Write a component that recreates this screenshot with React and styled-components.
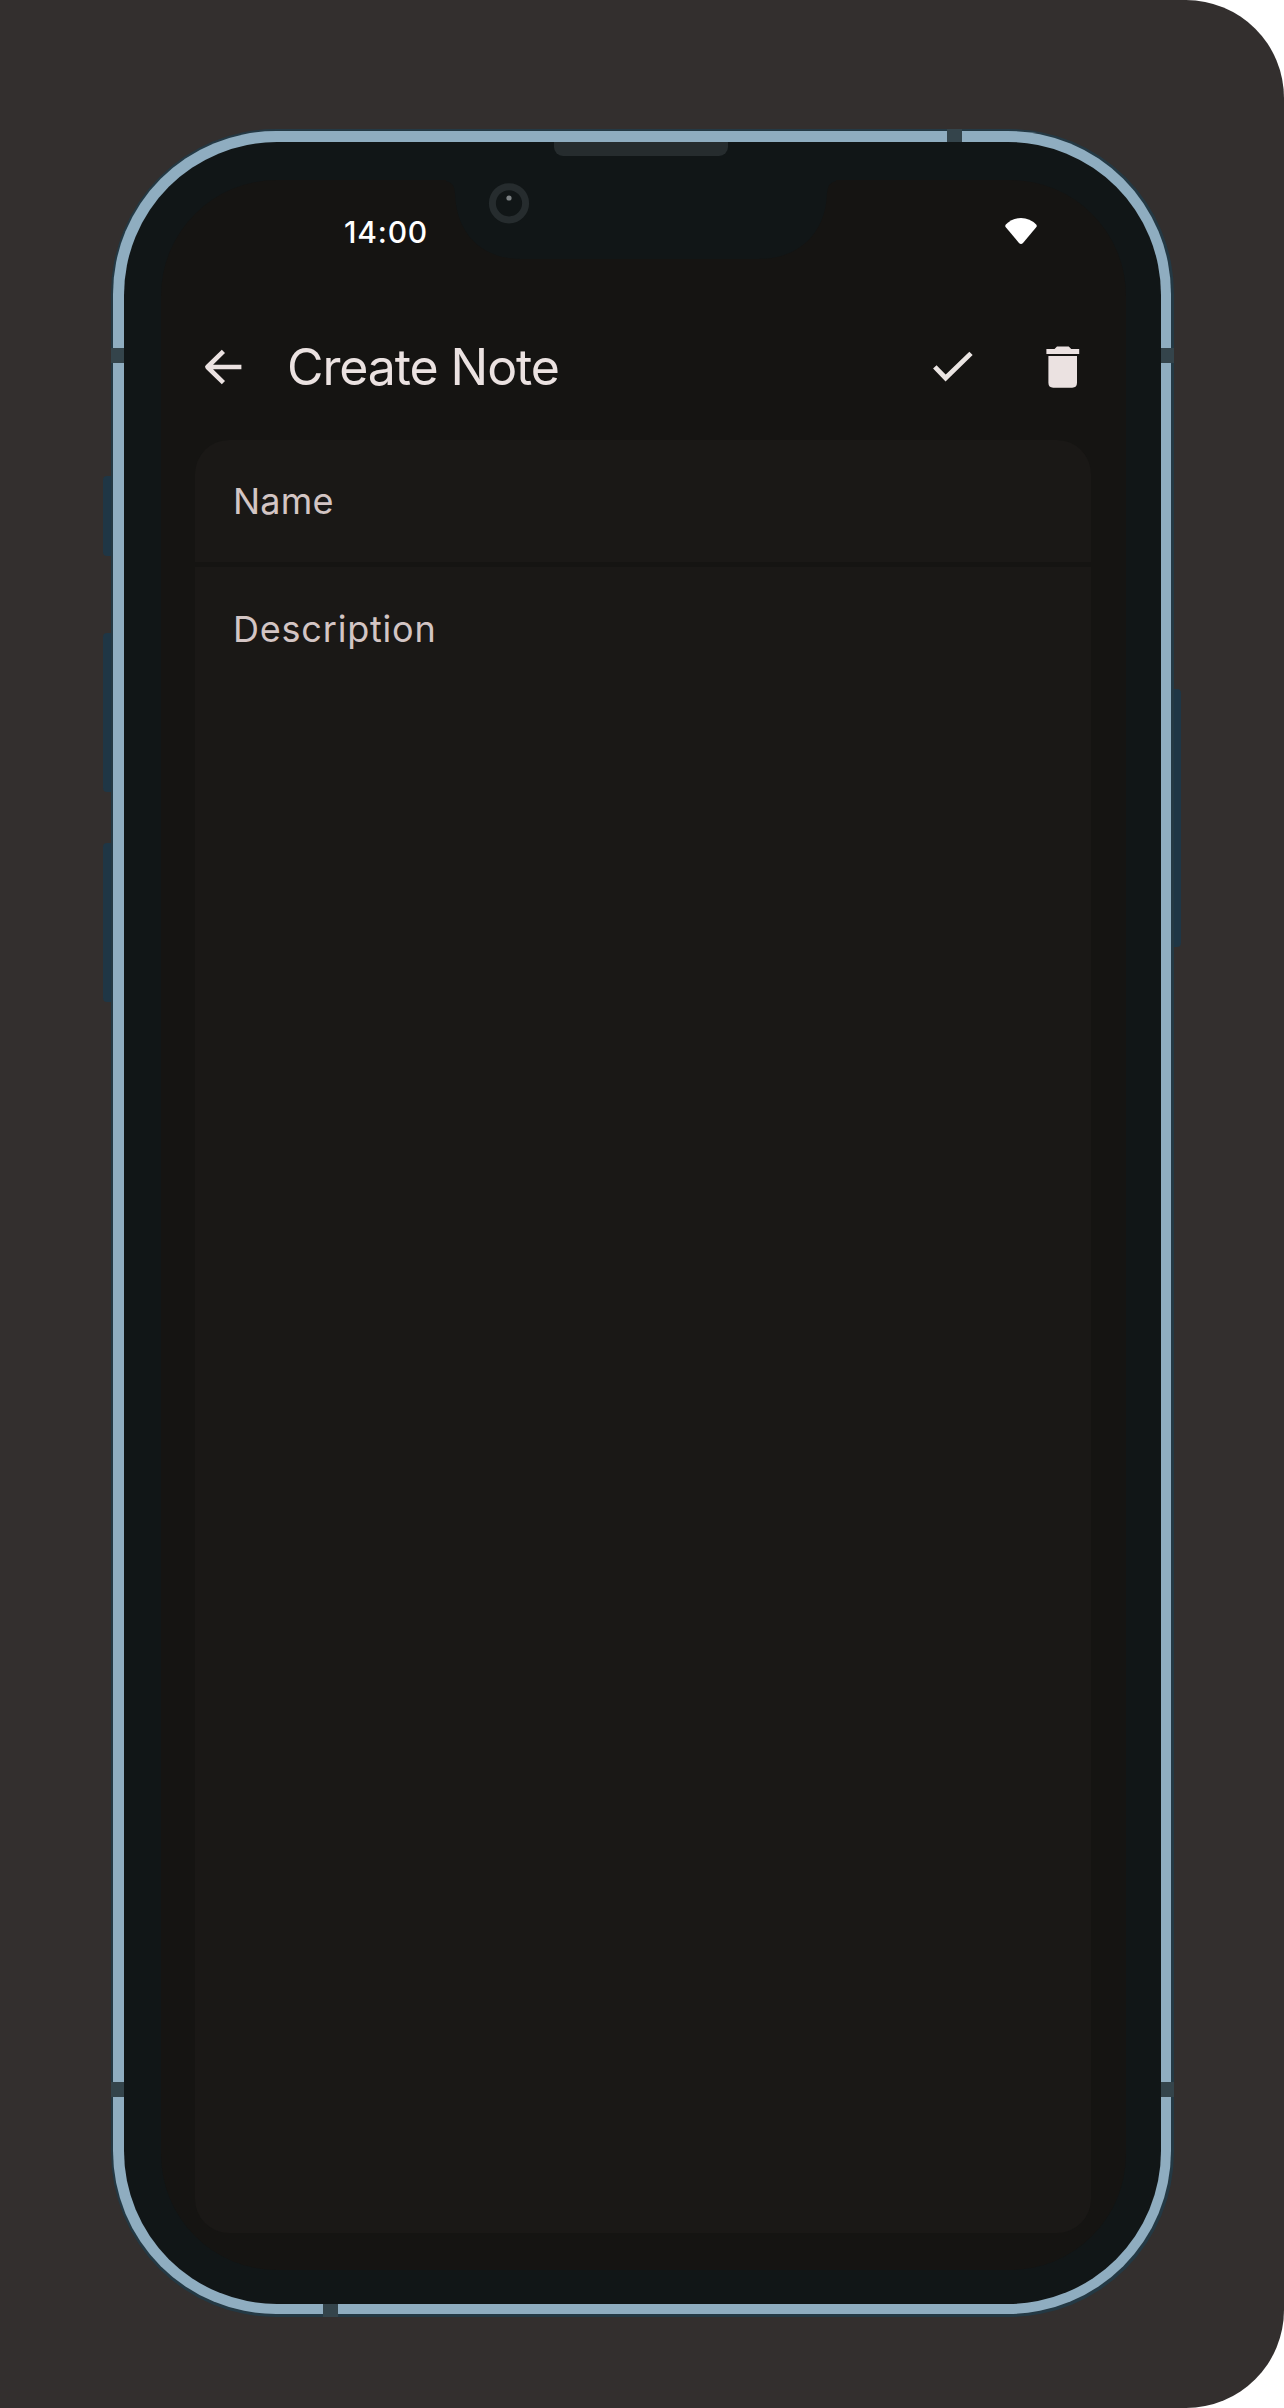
import React from "react";
import styled, { createGlobalStyle } from "styled-components";

const GlobalStyle = createGlobalStyle`
  * { box-sizing: border-box; }
  body { margin: 0; background: #ffffff; font-family: Inter, "Liberation Sans", sans-serif; }
`;

const Backdrop = styled.main`
  width: 1284px;
  height: 2408px;
  padding: 129px 110px 91px 111px;
  background: #332f2e;
  border-radius: 0 98px 98px 0;
`;

const Phone = styled.div`
  position: relative;
  width: 1063px;
  height: 2188px;
  padding: 2px 3px 3px 2px;
  border-radius: 165px;
  background: #243944;
`;

const SideButton = styled.span`
  position: absolute;
  z-index: -1;
  top: ${(p) => p.$top}px;
  ${(p) => p.$side}: ${(p) => (p.$side === "left" ? -8 : -7)}px;
  width: 14px;
  height: ${(p) => p.$length}px;
  border-radius: 4px;
  background: #1f3645;
`;

const Stage = styled.div`
  isolation: isolate;
`;

const Rim = styled.div`
  height: 100%;
  padding: 11px 10px 10px 11px;
  border-radius: 163px;
  background: #8fadc0;
`;

const Bezel = styled.div`
  height: 100%;
  padding: 38px 35px 34px 37px;
  border-radius: 153px;
  background: #111617;
`;

const AntennaBand = styled.span`
  position: absolute;
  top: ${(p) => p.$top}px;
  left: ${(p) => p.$left}px;
  width: ${(p) => (p.$upright ? 15 : 13)}px;
  height: ${(p) => (p.$upright ? 13 : 15)}px;
  background: #34444b;
`;

const Speaker = styled.span`
  position: absolute;
  top: 13px;
  left: 443px;
  width: 174px;
  height: 14px;
  border-radius: 0 0 9px 9px;
  background: #262c2e;
`;

const Notch = styled.svg`
  position: absolute;
  top: 50px;
  left: 335px;
`;

const Screen = styled.div`
  height: 100%;
  display: flex;
  flex-direction: column;
  padding: 0 35px 37px 34px;
  border-radius: 116px;
  background: #151412;
`;

const StatusBar = styled.header`
  height: 105px;
  flex: none;
  display: flex;
  align-items: center;
  justify-content: space-between;
  padding: 0 54px 3px 149px;
`;

const Clock = styled.time`
  padding-top: 2px;
  font: 500 30px/36px Inter, sans-serif;
  letter-spacing: 0.8px;
  color: #ffffff;
`;

const AppBar = styled.div`
  height: 155px;
  flex: none;
  display: flex;
  align-items: center;
  padding: 8px 11px 0 9px;
`;

const IconButton = styled.button`
  display: flex;
  margin: 0 0 0 ${(p) => p.$gap || 0}px;
  padding: 0;
  border: 0;
  background: none;
`;

const Title = styled.h1`
  flex: 1;
  margin: 0 0 0 45px;
  font: 400 50px/60px Inter, sans-serif;
  letter-spacing: -1.1px;
  color: #ebe2e1;
`;

const Form = styled.form`
  flex: 1;
  display: flex;
  flex-direction: column;
  gap: 5px;
  border-radius: 34px;
  overflow: hidden;
`;

const Field = styled.label`
  flex: ${(p) => (p.$fill ? "1" : "0 0 122px")};
  padding: ${(p) => (p.$fill ? 40 : 39)}px 38px;
  font: 400 36px/44px Inter, sans-serif;
  letter-spacing: ${(p) => p.$tracking}px;
  color: #d3c5c4;
  background: #1a1816;
`;

const bands = [
  { top: 219, left: 0 },
  { top: 219, left: 1050 },
  { top: 1953, left: 0 },
  { top: 1953, left: 1050 },
  { top: 0, left: 836, upright: true },
  { top: 2175, left: 212, upright: true },
];

const buttons = [
  { side: "left", top: 347, length: 80 },
  { side: "left", top: 504, length: 159 },
  { side: "left", top: 714, length: 159 },
  { side: "right", top: 560, length: 258 },
];

const WifiIcon = () => (
  <svg width="32" height="26" viewBox="0 0 32 26" fill="#fff">
    <path d="M.8 6.6Q7 0 16 0T31.2 6.6Q32.3 7.9 31.2 9.3L18.2 24.8Q16 27.2 13.8 24.8L.8 9.3Q-.3 7.9.8 6.6Z" />
  </svg>
);

const BackIcon = () => (
  <svg width="38" height="36" viewBox="0 0 38 36" fill="none" stroke="#ebe2e1" strokeWidth="4.6">
    <path d="M19.4 2.4 3.4 18 19.4 33.6M3.4 18H37.4" strokeLinejoin="round" />
  </svg>
);

const CheckIcon = () => (
  <svg width="40" height="32" viewBox="0 0 40 32" fill="none" stroke="#ebe5e3" strokeWidth="4.8">
    <path d="M1.8 15.8 12.6 27 38 2.4" />
  </svg>
);

const TrashIcon = () => (
  <svg width="34" height="42" viewBox="0 0 34 42" fill="#ebe2e1">
    <path d="M.4 3H8.5L11 .5H22.7L25.2 3H33.2V8H.4ZM2.4 10H31V36.8Q31 41.7 26.2 41.7H7.2Q2.4 41.7 2.4 36.8Z" />
  </svg>
);

export default function App() {
  return (
    <>
      <GlobalStyle />
      <Backdrop>
        <Stage>
          <Phone>
            {buttons.map((b) => (
              <SideButton key={`${b.side}${b.top}`} $side={b.side} $top={b.top} $length={b.length} />
            ))}
            <Rim>
              <Bezel>
                <Screen>
                  <StatusBar>
                    <Clock>14:00</Clock>
                    <WifiIcon />
                  </StatusBar>
                  <AppBar>
                    <IconButton aria-label="Back"><BackIcon /></IconButton>
                    <Title>Create Note</Title>
                    <IconButton aria-label="Save"><CheckIcon /></IconButton>
                    <IconButton aria-label="Delete" $gap={73}><TrashIcon /></IconButton>
                  </AppBar>
                  <Form>
                    <Field $tracking={0.2}>Name</Field>
                    <Field $fill $tracking={0.8}>Description</Field>
                  </Form>
                </Screen>
              </Bezel>
            </Rim>
            <Notch width="390" height="80" viewBox="0 0 390 80">
              <path fill="#111617" d="M0 0H390V2Q382 3 381 14C380 54 353 80 313 80H75C35 80 10 54 9 14Q8 3 0 2Z" />
              <circle cx="63" cy="24.3" r="16.6" fill="none" stroke="#262c2e" strokeWidth="7" />
              <circle cx="63" cy="19" r="2.6" fill="#7c8183" />
            </Notch>
            <Speaker />
            {bands.map((b) => (
              <AntennaBand key={`${b.top}-${b.left}`} $top={b.top} $left={b.left} $upright={b.upright} />
            ))}
          </Phone>
        </Stage>
      </Backdrop>
    </>
  );
}
